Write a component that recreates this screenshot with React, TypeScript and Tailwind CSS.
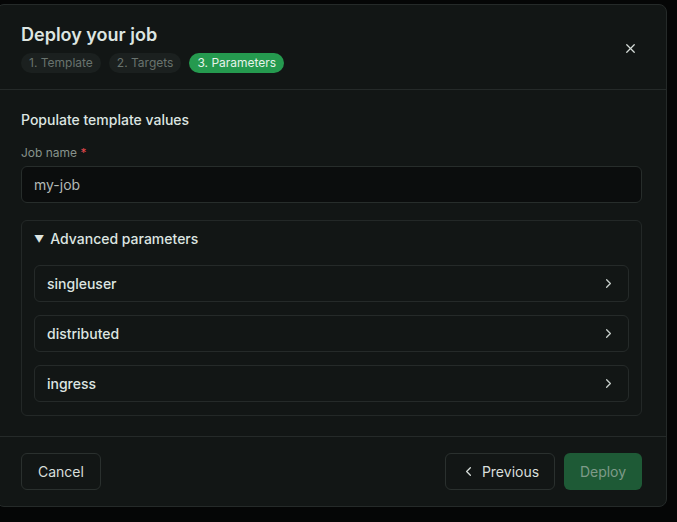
import { ChevronLeft, ChevronRight, X } from 'lucide-react';

const steps = [
  { label: '1. Template', active: false },
  { label: '2. Targets', active: false },
  { label: '3. Parameters', active: true },
];

const params = ['singleuser', 'distributed', 'ingress'];

export default function App() {
  return (
    <div className="min-h-[522px] bg-[#050606] pt-[4px] font-['Inter',sans-serif] overflow-hidden">
      <div className="ml-[-4px] w-[671px] rounded-lg border border-[#252a29] bg-[#121615]">
        {/* header */}
        <div className="flex items-start justify-between border-b border-[#252a29] px-6 pt-[16px] pb-[16px]">
          <div>
            <h2 className="text-[18px] leading-7 font-semibold text-[#dde5e1]">Deploy your job</h2>
            <div className="mt-[4px] flex gap-2">
              {steps.map((s) => (
                <span
                  key={s.label}
                  className={
                    s.active
                      ? 'rounded-full bg-[#259a4f] px-2 text-[12px] leading-5 text-[#e6f2ea]'
                      : 'rounded-full bg-[#1b201f] px-2 text-[12px] leading-5 text-[#69736e]'
                  }
                >
                  {s.label}
                </span>
              ))}
            </div>
          </div>
          <button className="mt-[20px] mr-[4px] text-[#d5dcd8]">
            <X size={15} strokeWidth={2} />
          </button>
        </div>

        {/* body */}
        <div className="px-6 pt-5 pb-[20px]">
          <h3 className="text-[14px] leading-5 font-medium text-[#dde5e1]">Populate template values</h3>
          <label className="mt-[15px] block text-[12px] leading-4 text-[#87938c]">
            Job name <span className="text-[#e5484d]">*</span>
          </label>
          <div className="mt-[5px] flex h-[37px] items-center rounded-md border border-[#272d2b] bg-[#0b0d0d] px-[12px] text-[14px] text-[#b3bab6]">
            my-job
          </div>

          <div className="mt-[17px] rounded-md border border-[#232827] px-[12px] pt-[8px] pb-[13px]">
            <div className="flex items-center gap-[6px] text-[14px] leading-5 font-medium text-[#dde5e1]">
              <span className="text-[10px]">▼</span>
              Advanced parameters
            </div>
            <div className="mt-[16px] flex flex-col gap-[13px]">
              {params.map((p) => (
                <div
                  key={p}
                  className="flex h-[37px] items-center justify-between rounded-md border border-[#252a29] px-[12px] text-[14px] font-medium text-[#dde5e1]"
                >
                  {p}
                  <ChevronRight size={15} strokeWidth={2} className="text-[#c9d1cd]" />
                </div>
              ))}
            </div>
          </div>
        </div>

        {/* footer */}
        <div className="flex items-center justify-between border-t border-[#252a29] px-6 pt-[16px] pb-[16px]">
          <button className="h-[37px] rounded-md border border-[#2a302e] px-4 text-[14px] text-[#d8dfdb]">
            Cancel
          </button>
          <div className="flex gap-[9px]">
            <button className="flex h-[37px] w-[110px] items-center justify-center gap-[6px] rounded-md border border-[#2a302e] text-[14px] text-[#d8dfdb]">
              <ChevronLeft size={15} strokeWidth={2} />
              Previous
            </button>
            <button className="h-[37px] w-[78px] rounded-md bg-[#1e5a36] text-[14px] text-[#7f9a89]">
              Deploy
            </button>
          </div>
        </div>
      </div>
    </div>
  );
}
